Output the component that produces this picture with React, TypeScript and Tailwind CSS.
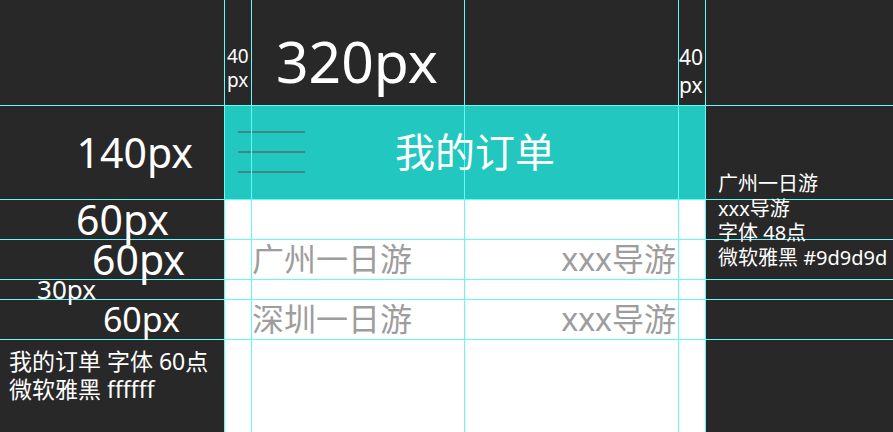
import React from "react";

// Spec sheet: phone mock (480px wide) with guide lines and size notes.

const V_LINES = ["left-[224px]", "left-[251px]", "left-[464px]", "left-[678px]", "left-[705px]"];
const H_LINES = ["top-[105px]", "top-[199px]", "top-[239px]", "top-[279px]", "top-[299px]", "top-[339px]"];

const TRIPS = [
  { name: "广州一日游", guide: "xxx导游" },
  { name: "深圳一日游", guide: "xxx导游" },
];

function Guides() {
  return (
    <div className="absolute inset-0 pointer-events-none">
      {V_LINES.map((c) => (
        <div key={c} className={`absolute top-0 h-full w-px bg-[#62fafa] ${c}`} />
      ))}
      {H_LINES.map((c) => (
        <div key={c} className={`absolute left-0 w-full h-px bg-[#62fafa] ${c}`} />
      ))}
    </div>
  );
}

function TripRow({ name, guide }: { name: string; guide: string }) {
  return (
    <div className="h-[40px] flex items-center justify-between pl-[28px] pr-[29px] text-[32px] leading-none text-[#9d9d9d]">
      <span className="relative">{name}</span>
      <span className="relative">{guide}</span>
    </div>
  );
}

export default function App() {
  return (
    <div
      className="relative w-[893px] h-[432px] overflow-hidden bg-[#282828] text-white flex"
      style={{ fontFamily: '"Noto Sans", "Noto Sans CJK SC", sans-serif' }}
    >
      <Guides />

      {/* left notes */}
      <div className="w-[224px] shrink-0 flex flex-col">
        <div className="h-[105px]" />
        <div className="h-[94px] flex items-center justify-end pr-[31px] text-[41px] leading-none">
          <span className="relative">140px</span>
        </div>
        <div className="h-[40px] flex items-center justify-end pr-[55px] text-[41px] leading-none">
          <span className="relative">60px</span>
        </div>
        <div className="h-[40px] flex items-center justify-end pr-[39px] text-[41px] leading-none">
          <span className="relative">60px</span>
        </div>
        <div className="h-[20px] flex items-center justify-end pr-[128px] text-[26px] leading-none">
          <span className="relative">30px</span>
        </div>
        <div className="h-[40px] flex items-center justify-end pr-[44px] text-[34px] leading-none">
          <span className="relative">60px</span>
        </div>
        <div className="flex-1 pl-[9px] pt-[8px] text-[23px] leading-[28px] whitespace-nowrap">
          <p className="relative">我的订单 字体 60点</p>
          <p className="relative">微软雅黑 ffffff</p>
        </div>
      </div>

      {/* phone */}
      <div className="w-[481px] shrink-0 flex flex-col">
        <div className="h-[105px] flex">
          <div className="w-[27px] pt-[44px] pl-[3px] text-[19px] leading-[24px]">
            <p className="relative">40</p>
            <p className="relative">px</p>
          </div>
          <div className="w-[213px] pt-[33px] pl-[25px] text-[57px] leading-none">
            <span className="relative">320px</span>
          </div>
          <div className="w-[214px]" />
          <div className="w-[27px] pt-[43px] pl-[1px] text-[21px] leading-[28px]">
            <p className="relative">40</p>
            <p className="relative">px</p>
          </div>
        </div>

        <div className="h-[94px] bg-[#22c7bf] flex items-center">
          <div className="ml-[14px] w-[67px] flex flex-col gap-[18px]">
            <div className="h-[2px] bg-[#3f8985]" />
            <div className="h-[2px] bg-[#3f8985]" />
            <div className="h-[2px] bg-[#3f8985]" />
          </div>
          <div className="ml-[90px] text-[40px] leading-none">
            <span className="relative">我的订单</span>
          </div>
        </div>

        <div className="flex-1 bg-white flex flex-col">
          <div className="h-[40px]" />
          <TripRow {...TRIPS[0]} />
          <div className="h-[20px]" />
          <TripRow {...TRIPS[1]} />
        </div>
      </div>

      {/* right notes */}
      <div className="flex-1 pl-[13px] pt-[172px] text-[20px] leading-[24.5px] whitespace-nowrap">
        <p className="relative">广州一日游</p>
        <p className="relative">xxx导游</p>
        <p className="relative">字体 48点</p>
        <p className="relative">微软雅黑 #9d9d9d</p>
      </div>
    </div>
  );
}
